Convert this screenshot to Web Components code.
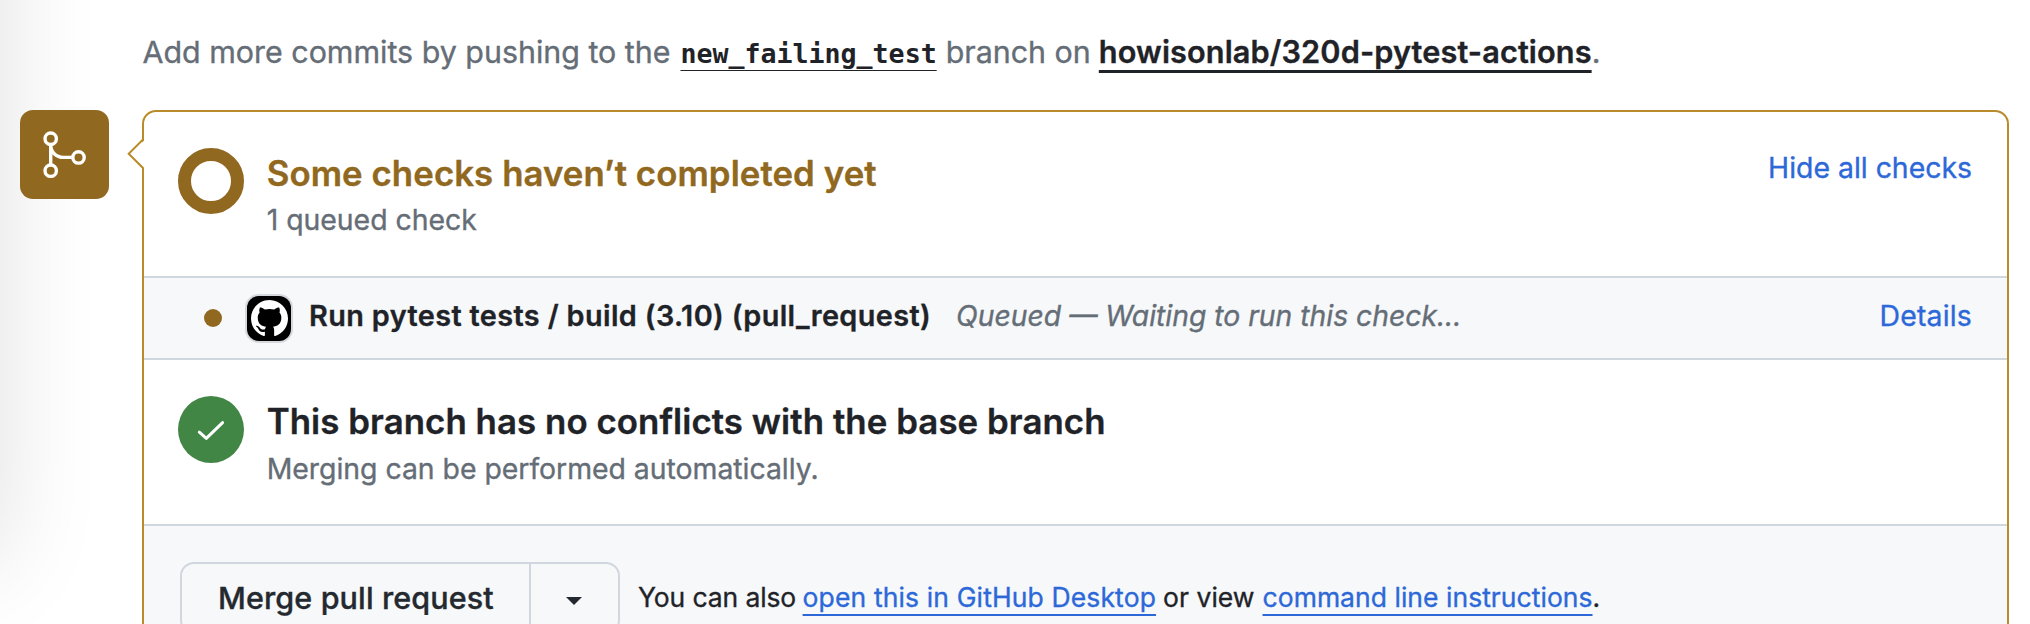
<!DOCTYPE html>
<html lang="en">
<head>
<meta charset="utf-8">
<title>Pull request merge status</title>
<style>
html, body { margin: 0; height: 100%; overflow: hidden; background: #fff; }
body { font-family: Inter, "Liberation Sans", sans-serif; color: #1f2328; -webkit-text-stroke: .35px currentColor; }
</style>
</head>
<body>
<merge-page>
  <push-hint slot="hint"></push-hint>
  <merge-badge slot="badge"></merge-badge>
  <merge-box>
    <status-row tone="pending" style="--sub-gap:2px">
      <status-icon slot="icon" kind="ring"></status-icon>
      <span slot="title">Some checks haven’t completed yet</span>
      <span slot="sub">1 queued check</span>
      <span slot="action">Hide all checks</span>
    </status-row>
    <check-item>
      <span slot="name">Run pytest tests / build (3.10) (pull_request)</span>
      <span slot="state">Queued — Waiting to run this check...</span>
      <span slot="action">Details</span>
    </check-item>
    <status-row style="--sub-gap:3px">
      <status-icon slot="icon" kind="check"></status-icon>
      <span slot="title">This branch has no conflicts with the base branch</span>
      <span slot="sub">Merging can be performed automatically.</span>
    </status-row>
    <merge-actions></merge-actions>
  </merge-box>
</merge-page>
<script>
function define(name, markup) {
  const template = document.createElement('template');
  template.innerHTML = markup;
  customElements.define(name, class extends HTMLElement {
    constructor() {
      super();
      this.attachShadow({ mode: 'open' }).append(template.content.cloneNode(true));
    }
  });
}

define('merge-page', `
<style>
:host { display: block; position: relative; width: 2030px; height: 624px; overflow: hidden; background: #fff; }
.edge { position: absolute; left: -300px; top: -300px; width: 300px; height: 862px; box-shadow: 0 0 100px rgba(0,0,0,.125); }
.main { position: relative; display: flex; flex-direction: column; height: 100%; }
.body { display: flex; align-items: flex-start; padding: 28px 0 0 20px; gap: 33px; }
</style>
<div class="edge"></div>
<div class="main">
  <slot name="hint"></slot>
  <div class="body"><slot name="badge"></slot><slot></slot></div>
</div>`);

define('push-hint', `
<style>
:host { display: flex; align-items: baseline; height: 60px; padding: 22px 0 0 142.5px; font-size: 30.4px; line-height: 60px; color: #656d76; -webkit-text-stroke-color: #656d76; white-space: nowrap; }
a { color: #1f2328; -webkit-text-stroke-color: #1f2328; text-decoration: underline; text-decoration-skip-ink: none; text-underline-offset: 7px; }
.branch { margin: 0 9px 0 10px; font: 700 26.6px/60px "DejaVu Sans Mono", monospace; text-decoration-thickness: 1px; -webkit-text-stroke-width: 0; }
.repo { margin-left: 8px; font-weight: 600; font-size: 30.7px; letter-spacing: .1px; text-decoration-thickness: 3px; }
</style>
<span>Add more commits by pushing to the</span>
<a class="branch">new_failing_test</a>
<span>branch on</span>
<a class="repo">howisonlab/320d-pytest-actions</a><span>.</span>`);

define('merge-badge', `
<style>
:host { display: block; flex: none; width: 89px; height: 89px; border-radius: 13px; background: #916820; }
svg { display: block; }
</style>
<svg width="89" height="89" viewBox="0 0 89 89" fill="none" stroke="#fff" stroke-width="3.4">
  <circle cx="30.7" cy="28.7" r="5.7"/><circle cx="30.7" cy="60.7" r="5.7"/><circle cx="58.5" cy="47.4" r="5.7"/>
  <path d="M30.7 34.4V55M30.7 34.4C30.7 42 36 47.4 43.5 47.4H52.8"/>
</svg>`);

define('merge-box', `
<style>
:host { display: block; position: relative; box-sizing: border-box; flex: none; width: 1867px; height: 620px; border: 2px solid #b98b2a; border-radius: 14px; background: #fff; }
.tip { position: absolute; left: -17px; top: 26px; }
</style>
<svg class="tip" width="18" height="34" viewBox="0 0 18 34"><path d="M17.5 2.2L2.2 15.8L17.5 30.2Z" fill="#fff"/><path d="M16 1.5L1.7 15.7L16 30" fill="none" stroke="#b98b2a" stroke-width="2"/></svg>
<slot></slot>`);

define('status-icon', `
<style>
:host { display: block; box-sizing: border-box; flex: none; width: 66px; height: 66px; border-radius: 50%; }
:host([kind="ring"]) { border: 13px solid #916820; }
:host([kind="check"]) { height: 67px; background: #428646; }
svg { display: none; }
:host([kind="check"]) svg { display: block; }
</style>
<svg width="66" height="67" viewBox="0 0 66 67" fill="none" stroke="#fff" stroke-width="3" stroke-linecap="round" stroke-linejoin="round"><path d="M21.3 36.2L28.3 42.4L44.6 26.6"/></svg>`);

define('status-row', `
<style>
:host { display: flex; align-items: flex-start; box-sizing: border-box; height: 166px; padding: 36px 35px 0 34px; border-bottom: 2px solid #d0d7de; white-space: nowrap; }
.text { flex: 1; margin: 2px 0 0 22.7px; }
.title { font-weight: 600; font-size: 34.8px; line-height: 46px; letter-spacing: .07px; }
:host([tone="pending"]) .title { color: #916820; -webkit-text-stroke-color: #916820; }
.sub { margin-top: var(--sub-gap); font-size: 28.4px; line-height: 44px; letter-spacing: -.02px; color: #656d76; -webkit-text-stroke-color: #656d76; }
.action { margin-top: -2px; font-size: 28.4px; line-height: 44px; color: #2d68d8; -webkit-text-stroke-color: #2d68d8; }
</style>
<slot name="icon"></slot>
<div class="text"><div class="title"><slot name="title"></slot></div><div class="sub"><slot name="sub"></slot></div></div>
<div class="action"><slot name="action"></slot></div>`);

define('check-item', `
<style>
:host { display: flex; align-items: center; box-sizing: border-box; height: 82px; padding: 0 35px 0 60px; border-bottom: 2px solid #d0d7de; background: #f6f8fa; white-space: nowrap; }
.dot { flex: none; width: 18px; height: 18px; border-radius: 50%; background: #916820; }
.avatar { flex: none; width: 44px; height: 45px; margin: 0 18px 0 25px; border-radius: 12px; background: #000; box-shadow: 0 0 0 2px #d5d9dd; }
.avatar svg { display: block; margin: 4px 3.5px; }
.name, .state, .action { padding-bottom: 5px; line-height: 44px; }
.name { font-weight: 600; font-size: 28.8px; letter-spacing: .39px; }
.state { flex: 1; font-style: italic; font-size: 28.3px; color: #656d76; -webkit-text-stroke-color: #656d76; margin-left: 25px; }
.action { font-size: 28.4px; letter-spacing: .2px; color: #2d68d8; -webkit-text-stroke-color: #2d68d8; }
</style>
<span class="dot"></span>
<span class="avatar"><svg width="37" height="37" viewBox="0 0 16 16" fill="#fff"><path d="M8 0C3.58 0 0 3.58 0 8c0 3.54 2.29 6.53 5.47 7.59.4.07.55-.17.55-.38 0-.19-.01-.82-.01-1.49-2.01.37-2.53-.49-2.69-.94-.09-.23-.48-.94-.82-1.13-.28-.15-.68-.52-.01-.53.63-.01 1.08.58 1.23.82.72 1.21 1.87.87 2.33.66.07-.52.28-.87.51-1.07-1.78-.2-3.64-.89-3.64-3.95 0-.87.31-1.59.82-2.15-.08-.2-.36-1.02.08-2.12 0 0 .67-.21 2.2.82.64-.18 1.32-.27 2-.27s1.36.09 2 .27c1.53-1.04 2.2-.82 2.2-.82.44 1.1.16 1.92.08 2.12.51.56.82 1.27.82 2.15 0 3.07-1.87 3.75-3.65 3.95.29.25.54.73.54 1.48 0 1.07-.01 1.93-.01 2.2 0 .21.15.46.55.38A8.01 8.01 0 0 0 16 8c0-4.42-3.58-8-8-8z"/></svg></span>
<span class="name"><slot name="name"></slot></span>
<span class="state"><slot name="state"></slot></span>
<span class="action"><slot name="action"></slot></span>`);

define('merge-actions', `
<style>
:host { display: flex; align-items: flex-start; box-sizing: border-box; height: 180px; padding: 36px 0 0 36px; background: #f6f8fa; border-radius: 0 0 12px 12px; white-space: nowrap; }
.group { display: flex; box-sizing: border-box; width: 440px; height: 72px; border: 2px solid #d0d7de; border-radius: 14px; }
.merge { box-sizing: border-box; width: 349px; padding-left: 36px; border-right: 2px solid #d0d7de; font-weight: 500; font-size: 30.5px; line-height: 68px; letter-spacing: .12px; color: #24292f; }
.more { flex: 1; display: flex; align-items: center; justify-content: center; }
.more svg { margin: 5px 1px 0 0; }
.note { display: flex; margin-left: 18px; font-size: 26.5px; line-height: 71px; letter-spacing: .03px; }
.note span:first-child { letter-spacing: -.12px; }
a { color: #2d68d8; -webkit-text-stroke-color: #2d68d8; text-decoration: underline 2px; text-decoration-skip-ink: none; text-underline-offset: 7px; }
.desktop { margin: 0 7px 0 6.5px; letter-spacing: .13px; }
.cli { margin-left: 8px; }
</style>
<div class="group">
  <div class="merge">Merge pull request</div>
  <div class="more"><svg width="16" height="8" viewBox="0 0 16 8"><path d="M0 0H16L8 8Z" fill="#24292f"/></svg></div>
</div>
<div class="note"><span>You can also</span><a class="desktop">open this in GitHub Desktop</a><span>or view</span><a class="cli">command line instructions</a><span>.</span></div>`);
</script>
</body>
</html>
